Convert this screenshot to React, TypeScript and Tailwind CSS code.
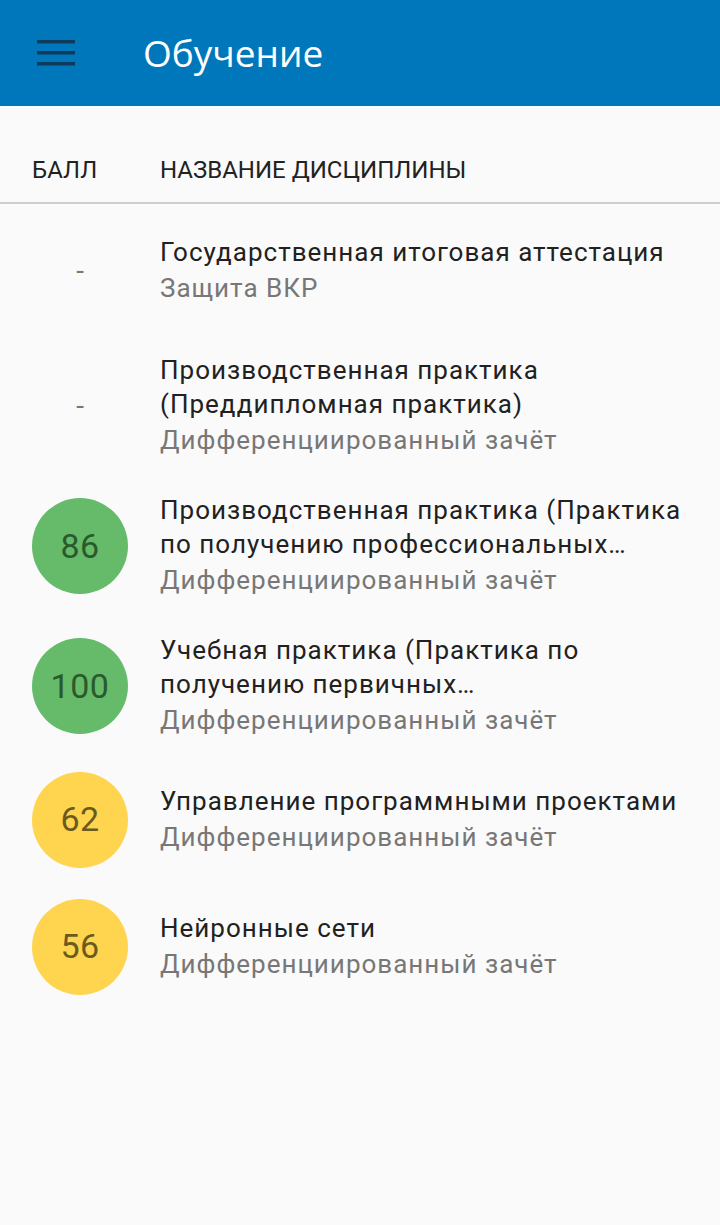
import React from 'react';

type Row = {
  score: number | null;
  title: string[];
  kind: string;
};

const rows: Row[] = [
  { score: null, title: ['Государственная итоговая аттестация'], kind: 'Защита ВКР' },
  {
    score: null,
    title: ['Производственная практика', '(Преддипломная практика)'],
    kind: 'Дифференциированный зачёт',
  },
  {
    score: 86,
    title: ['Производственная практика (Практика', 'по получению профессиональных…'],
    kind: 'Дифференциированный зачёт',
  },
  {
    score: 100,
    title: ['Учебная практика (Практика по', 'получению первичных…'],
    kind: 'Дифференциированный зачёт',
  },
  { score: 62, title: ['Управление программными проектами'], kind: 'Дифференциированный зачёт' },
  { score: 56, title: ['Нейронные сети'], kind: 'Дифференциированный зачёт' },
];

function Score({ value }: { value: number | null }) {
  if (value === null) {
    return (
      <div className="w-24 h-24 flex items-center justify-center text-[28px] text-[#777]">-</div>
    );
  }
  const good = value >= 75;
  return (
    <div
      className={`w-24 h-24 rounded-full flex items-center justify-center text-[34px] tracking-[0.5px] ${
        good ? 'bg-[#66bb6a] text-[#2a5a2c]' : 'bg-[#ffd54f] text-[#6b5a1e]'
      }`}
    >
      {value}
    </div>
  );
}

export default function App() {
  return (
    <div
      className="w-[720px] h-[1225px] bg-[#fafafa] flex flex-col"
      style={{ fontFamily: 'Roboto, "Noto Sans", sans-serif' }}
    >
      {/* Toolbar */}
      <div className="h-[106px] bg-[#0077bb] flex items-center shrink-0">
        <div className="w-[143px] flex pl-[37px]">
          <svg width="38" height="28" viewBox="0 0 38 28">
            <rect x="0" y="1" width="38" height="3.5" fill="#0e3a5c" />
            <rect x="0" y="12" width="38" height="3.5" fill="#0e3a5c" />
            <rect x="0" y="23" width="38" height="3.5" fill="#0e3a5c" />
          </svg>
        </div>
        <h1
          className="text-white text-[37px] leading-none pb-[2px]"
          style={{ fontFamily: '"Open Sans", "Noto Sans", sans-serif' }}
        >
          Обучение
        </h1>
      </div>

      {/* Column header */}
      <div className="h-[98px] flex items-end border-b-2 border-[#cfcfcf] text-[#222] text-[24px] shrink-0 pb-[14px]">
        <div className="w-[160px] pl-[32px]">БАЛЛ</div>
        <div>НАЗВАНИЕ ДИСЦИПЛИНЫ</div>
      </div>

      {/* List */}
      <div className="flex flex-col pt-[2px]">
        {rows.map((r, i) => (
          <div
            key={i}
            className={`flex items-center ${i === 0 ? 'min-h-[130px]' : 'min-h-[127px]'}`}
          >
            <div className="w-[160px] flex justify-center">
              <Score value={r.score} />
            </div>
            <div className="flex flex-col tracking-[1px] py-[17px]">
              {r.title.map((t, j) => (
                <div key={j} className="text-[26px] leading-[34px] text-[#212121]">
                  {t}
                </div>
              ))}
              <div className="text-[26px] leading-[38px] text-[#777]">{r.kind}</div>
            </div>
          </div>
        ))}
      </div>
    </div>
  );
}
